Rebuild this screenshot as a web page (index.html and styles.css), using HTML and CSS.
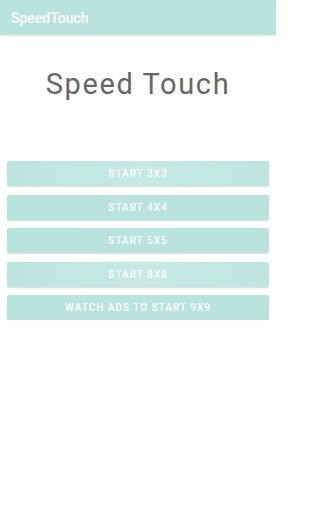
FILE: index.html
```html
<!DOCTYPE html>
<html>
<head>
<meta charset="utf-8">
<meta name="viewport" content="width=276">
<link rel="stylesheet" href="styles.css">
</head>
<body>
<div class="page">
  <div class="appbar"><span class="appbar-title">SpeedTouch</span></div>
  <main class="content">
    <h1 class="title">Speed Touch</h1>
    <div class="buttons">
      <button class="btn btn-shine">START 3X3</button>
      <button class="btn">START 4X4</button>
      <button class="btn">START 5X5</button>
      <button class="btn btn-shine">START 8X8</button>
      <button class="btn">WATCH ADS TO START 9X9</button>
    </div>
  </main>
</div>
</body>
</html>
```
FILE: styles.css
```css
html, body {
  margin: 0;
  padding: 0;
  background: #ffffff;
  font-family: Roboto, "Noto Sans", sans-serif;
}
.page {
  width: 276px;
}
.appbar {
  height: 35px;
  background: #b9e4de;
  display: flex;
  align-items: center;
  padding-left: 11px;
  box-shadow: 0 1px 2px rgba(0,0,0,0.12);
}
.appbar-title {
  color: #ffffff;
  font-size: 14px;
  font-weight: 500;
}
.content {
  padding: 0 7px;
}
.title {
  margin: 30px 0 0 0;
  text-align: center;
  font-size: 29px;
  font-weight: 400;
  letter-spacing: 1.6px;
  color: #666666;
  line-height: 38px;
}
.buttons {
  margin-top: 58px;
  display: flex;
  flex-direction: column;
  gap: 8.5px;
}
.btn {
  height: 25px;
  border: none;
  border-radius: 2px;
  background: #b9e4de;
  color: #ffffff;
  font-family: Roboto, "Noto Sans", sans-serif;
  font-size: 10px;
  font-weight: 500;
  letter-spacing: 1px;
  box-shadow: 0 1px 1.5px rgba(0,0,0,0.14);
  padding: 0;
}
.btn-shine {
  background: linear-gradient(90deg, #bce5df 0%, #c6e9e4 55%, #bde5df 100%);
}
```
